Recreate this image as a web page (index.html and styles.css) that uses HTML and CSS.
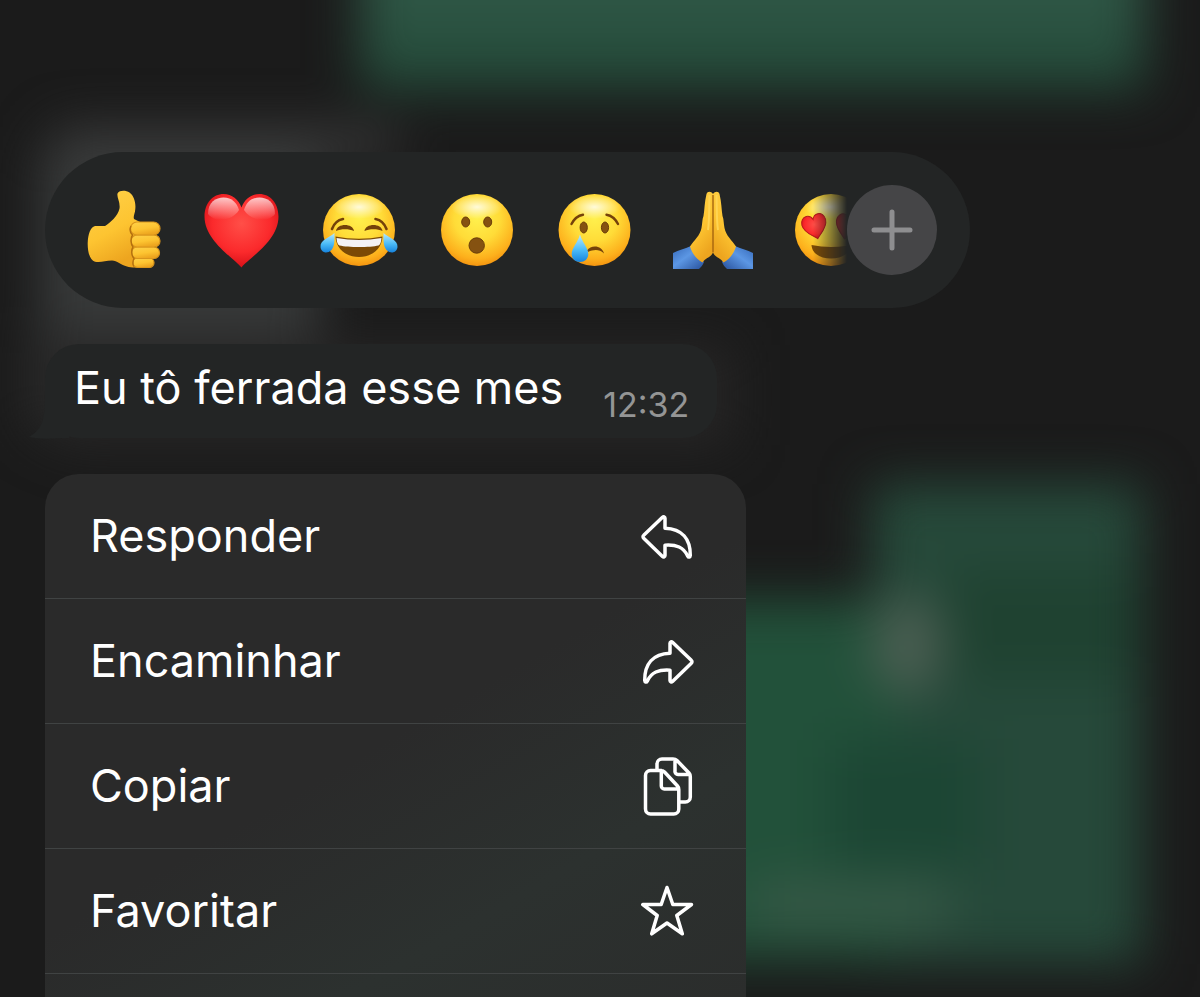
FILE: index.html
```html
<!DOCTYPE html>
<html lang="pt-BR">
<head>
<meta charset="utf-8">
<meta name="viewport" content="width=device-width, initial-scale=1">
<title>Mensagem</title>
<link rel="stylesheet" href="styles.css">
</head>
<body>
<svg class="backdrop" viewBox="0 0 1200 997" preserveAspectRatio="none" aria-hidden="true">
  <defs>
    <filter id="soft" x="-50%" y="-50%" width="200%" height="200%" color-interpolation-filters="sRGB"><feGaussianBlur stdDeviation="25"/></filter>
    <linearGradient id="topGreen" x1="0" y1="0" x2="0" y2="1"><stop offset="0.5" stop-color="#2f5746"/><stop offset="1" stop-color="#224837"/></linearGradient>
  </defs>
  <g filter="url(#soft)">
    <rect x="360" y="-100" width="785" height="190" fill="url(#topGreen)"/>
    <rect x="56" y="128" width="340" height="30" fill="#3c3c3c"/>
    <rect x="40" y="150" width="280" height="190" fill="#383a3a"/>
    <rect x="30" y="330" width="250" height="100" fill="#2c2c2c"/>
    <rect x="60" y="345" width="670" height="100" fill="#272626"/>
    <rect x="872" y="484" width="270" height="480" fill="#26493a"/>
    <rect x="600" y="600" width="300" height="360" fill="#22513a"/>
    <rect x="945" y="570" width="190" height="110" fill="#1f4231"/>
    <rect x="830" y="740" width="150" height="130" fill="#1c4634"/>
    <rect x="750" y="880" width="200" height="50" fill="#365846"/>
    <ellipse cx="908" cy="645" rx="36" ry="50" fill="#4c5f53"/>
  </g>
</svg>

<main class="overlay">
  <section class="reactions" aria-label="Reações">
    <svg width="0" height="0" class="defs" aria-hidden="true">
      <defs>
        <radialGradient id="face" cx="0.5" cy="0.34" r="0.7"><stop offset="0" stop-color="#fff04d"/><stop offset="0.45" stop-color="#ffdc38"/><stop offset="0.8" stop-color="#fdb01c"/><stop offset="1" stop-color="#f08a0c"/></radialGradient>
        <radialGradient id="glow"><stop offset="0" stop-color="#fff" stop-opacity="0.8"/><stop offset="1" stop-color="#fff" stop-opacity="0"/></radialGradient>
        <linearGradient id="shine" x1="0" y1="0" x2="0" y2="1"><stop offset="0" stop-color="#fff" stop-opacity="0.75"/><stop offset="1" stop-color="#fff" stop-opacity="0"/></linearGradient>
        <linearGradient id="tear" x1="0" y1="0" x2="0" y2="1"><stop offset="0" stop-color="#b9eaff"/><stop offset="0.55" stop-color="#4cbcf8"/><stop offset="1" stop-color="#1683dd"/></linearGradient>
        <radialGradient id="red" cx="0.5" cy="0.4" r="0.65"><stop offset="0" stop-color="#ff4f48"/><stop offset="0.6" stop-color="#fb2a2c"/><stop offset="1" stop-color="#d00b14"/></radialGradient>
        <linearGradient id="skin" x1="0" y1="0" x2="0.4" y2="1"><stop offset="0" stop-color="#ffd24a"/><stop offset="0.6" stop-color="#fdc431"/><stop offset="1" stop-color="#eda51f"/></linearGradient>
        <linearGradient id="sleeve" x1="0" y1="0" x2="1" y2="1"><stop offset="0" stop-color="#3468b8"/><stop offset="0.45" stop-color="#5c97e4"/><stop offset="1" stop-color="#27509b"/></linearGradient>
        <path id="heart" d="M39.500 77.500C32 68 2.500 51 2.500 26.500C2.500 13 11 4 21.500 4C30 4 36.500 9.500 39.500 17.500C42.500 9.500 49 4 57.500 4C68 4 76.500 13 76.500 26.500C76.500 51 47 68 39.500 77.500Z"/>
      </defs>
    </svg>
    <div class="reaction-list">
      <button class="reaction" type="button" aria-label="Joinha">
        <svg viewBox="0 0 80 80">
          <path fill="url(#skin)" d="M11 36H21C26 33 34 26 35.500 18.500C36.500 12 32 6 33.800 3C35.500 0 42 0 45.500 2.500C50 5.500 52 13 51.300 19C51 24 49 26 50 29L58 33L60 75C57 78 48 78 43 76.500C37 75 33 70.500 28 70.500C21 70.500 17 73 11 71.700C6 70.500 3.500 62 3.700 53C4 44 6.500 37 11 36Z"/>
          <g fill="url(#skin)" stroke="#d9951c" stroke-width="1.200">
            <rect x="49" y="68" width="21" height="9.500" rx="4.700"/>
            <rect x="47.500" y="57" width="28" height="11.500" rx="5.700"/>
            <rect x="47" y="45" width="29" height="12" rx="6"/>
            <rect x="46.500" y="32" width="29.500" height="13" rx="6.500"/>
          </g>
          <path d="M47 36C45 40 46.500 43 48.500 45C46.500 48 46.500 54 49 57C47 60 47.500 66 50 68.500C48.500 71 48.500 75 50 76.500" stroke="#b3700f" stroke-width="1.400" fill="none"/>
        </svg>
      </button>
      <button class="reaction" type="button" aria-label="Coração">
        <svg viewBox="0 0 80 80">
          <use href="#heart" fill="url(#red)"/>
          <path fill="url(#shine)" d="M6 24C6 12 14 7.500 21.500 7.500C30 7.500 35 13 37 20C31 30 14 34 6 24Z"/>
          <path fill="url(#shine)" d="M73 24C73 12 65 7.500 57.500 7.500C49 7.500 44 13 42 20C48 30 65 34 73 24Z"/>
        </svg>
      </button>
      <button class="reaction" type="button" aria-label="Chorando de rir">
        <svg viewBox="0 0 80 80">
          <circle cx="39" cy="40" r="36" fill="url(#face)"/>
          <ellipse cx="39" cy="17" rx="26" ry="12" fill="url(#glow)"/>
          <g fill="none" stroke="#75420a" stroke-width="2.600" stroke-linecap="round">
            <path d="M12 39C14 33.500 18 30 23 29"/><path d="M66.500 39C64.500 33.500 60.500 30 55.500 29"/>
          </g>
          <path fill="#75420a" d="M16 41C17 33 33 33 34 41C29 38.500 21 38.500 16 41ZM44.500 41C45.500 33 61.500 33 62.500 41C57.500 38.500 49.500 38.500 44.500 41Z"/>
          <path fill="#7b4a05" d="M15.500 46.500Q39 51 62.500 46.500C62 59 52 67 39 67S16 59 15.500 46.500Z"/>
          <path fill="#f4f3f5" d="M16.500 48Q39 52 61.500 48C61 52.500 60.500 54.500 58.500 55.500C50 57.500 28 57.500 19.500 55.500C17.500 54.500 17 52.500 16.500 48Z"/>
          <path fill="url(#tear)" d="M14.500 43C14.500 49 15 56 11.500 60C7 64.500 1 62.500 .5 57C0 50 9 48 14.500 43Z"/>
          <path fill="url(#tear)" d="M63.500 43C63.500 49 63 56 66.500 60C71 64.500 77 62.500 77.500 57C78 50 69 48 63.500 43Z"/>
        </svg>
      </button>
      <button class="reaction" type="button" aria-label="Surpresa">
        <svg viewBox="0 0 80 80">
          <circle cx="39" cy="40" r="36" fill="url(#face)"/>
          <ellipse cx="39" cy="17" rx="26" ry="12" fill="url(#glow)"/>
          <g fill="#855211" stroke="#6b3e08" stroke-width="1"><ellipse cx="27.700" cy="32" rx="4" ry="5"/><ellipse cx="49.700" cy="32" rx="4" ry="5"/><circle cx="38.700" cy="55.500" r="7.700"/></g>
        </svg>
      </button>
      <button class="reaction" type="button" aria-label="Triste">
        <svg viewBox="0 0 80 80">
          <circle cx="38.500" cy="40" r="36" fill="url(#face)"/>
          <ellipse cx="38.500" cy="17" rx="26" ry="12" fill="url(#glow)"/>
          <g fill="none" stroke="#75420a" stroke-width="2.400" stroke-linecap="round"><path d="M15.500 34C18 29 22 25.500 27 24.700"/><path d="M62 34C59.500 29 55.500 25.500 50.500 24.700"/></g>
          <g fill="#855211" stroke="#6b3e08" stroke-width="1"><ellipse cx="27.700" cy="37.500" rx="3.600" ry="5.500"/><ellipse cx="49" cy="37.500" rx="3.600" ry="5.500"/></g>
          <path fill="#75420a" d="M31 60.500C35 54.500 46 55 48 63.500C43 59 38 59.500 32 62Z"/>
          <path fill="url(#tear)" d="M24 44.500C26 52 32.300 58 32.300 64C32.300 69 28.500 72 24 72S15.700 69 15.700 64C15.700 58 22 52 24 44.500Z"/>
        </svg>
      </button>
      <button class="reaction" type="button" aria-label="Mãos juntas">
        <svg viewBox="0 0 80 80">
          <g id="hand">
            <path fill="url(#sleeve)" d="M-1 63C5 60 10 59 17 56L30 72C29 75 27 77 25 79H-1Z"/>
            <path fill="url(#skin)" d="M39 4C37 1 33.500 1 32.500 4C30.500 12 30.500 20 29.500 26C28 30 28.500 33 27.500 38C26 46 20 50 16 56.500C18 63 22 69 28.500 72.500C31 68 38 67 39 62Z"/>
            <path d="M35.500 5C35 18 35.500 30 34 40" fill="none" stroke="#ffd452" stroke-width="2"/>
          </g>
          <use href="#hand" transform="translate(78) scale(-1 1)"/>
          <path d="M39 5V62" stroke="#a5650f" stroke-width="1.400"/>
        </svg>
      </button>
      <button class="reaction" type="button" aria-label="Apaixonado">
        <svg viewBox="0 0 80 80">
          <circle cx="39" cy="40" r="36" fill="url(#face)"/>
          <ellipse cx="39" cy="17" rx="26" ry="12" fill="url(#glow)"/>
          <use href="#heart" fill="url(#red)" stroke="#b5181b" stroke-width="3" transform="translate(7 27) rotate(-14) scale(.33)"/>
          <use href="#heart" fill="url(#red)" stroke="#b5181b" stroke-width="3" transform="translate(46 21) rotate(14) scale(.33)"/>
          <path fill="#7b4a05" d="M19.500 55Q39 59 58.500 55C58 64 49 68.500 39 68.500S20 64 19.500 55Z"/>
        </svg>
      </button>
    </div>
    <button class="more" type="button" aria-label="Mais reações">
      <svg viewBox="0 0 44 44"><path d="M22 4V40M4 22H40"/></svg>
    </button>
  </section>

  <article class="bubble">
    <svg class="tail" viewBox="0 0 40 50" aria-hidden="true"><path d="M16 0C16 28 15 38 0 47C14 50 26 48 40 48V0Z"/></svg>
    <p class="message">Eu tô ferrada esse mes</p>
    <time class="time" datetime="12:32">12:32</time>
  </article>

  <nav class="menu" aria-label="Ações da mensagem">
    <button class="action" type="button">Responder
      <svg class="icon" viewBox="0 0 53 60"><path id="arrow" d="M21.500 11.300L2.700 29.200a2 2 0 0 0 0 3L21.500 50.500c1 .9 2.500.4 2.500-1V39.200C35.500 38.500 42.500 41 46.800 50.200c.7 1.400 2.400 1 2.500-.7C49.500 33 41 22.800 24 22.200V12.300c0-1.400-1.500-1.900-2.500-1z"/></svg>
    </button>
    <button class="action" type="button">Encaminhar
      <svg class="icon" viewBox="0 0 53 60"><use href="#arrow" transform="translate(53) scale(-1 1)"/></svg>
    </button>
    <button class="action" type="button">Copiar
      <svg class="icon" viewBox="0 0 53 60"><path d="M9.500 14.500H19.500Q22 14.500 23.500 16L36.500 30Q37.800 31.500 37.800 33.500V53a5 5 0 0 1-5 5H9.500a5 5 0 0 1-5-5V19.500a5 5 0 0 1 5-5zM20.300 14.500V30a3 3 0 0 0 3 3H37.800M16 14V8a5 5 0 0 1 5-5H32Q34.500 3 36 4.500L48 17Q49.300 18.500 49.300 20.500V41a5 5 0 0 1-5 5H38.500M34 3.500V15a3 3 0 0 0 3 3.500H49"/></svg>
    </button>
    <button class="action" type="button">Favoritar
      <svg class="icon" viewBox="0 0 53 60"><path d="M26 6.500L31.800 23.500H50.500L35.800 34.500L41.300 52.800L26 42L10.700 52.800L16.200 34.500L1.800 23.500H20.200Z"/></svg>
    </button>
  </nav>
</main>
</body>
</html>
```
FILE: styles.css
```css
* { box-sizing: border-box; }

body {
  margin: 0;
  background: #1b1b1b;
  color: #fff;
  font-family: Inter, "Liberation Sans", sans-serif;
}

.backdrop {
  position: absolute;
  inset: 0;
  width: 100%;
  height: 100%;
}

.defs { position: absolute; }

.overlay {
  position: relative;
  display: flex;
  flex-direction: column;
  align-items: flex-start;
  gap: 36px;
  min-height: 100vh;
  padding: 152px 45px 0;
}

button {
  border: 0;
  padding: 0;
  background: none;
  color: inherit;
  font: inherit;
  text-align: left;
}

.reactions {
  display: flex;
  align-items: center;
  width: 100%;
  max-width: 925px;
  padding: 33px 33px 33px 39px;
  border-radius: 78px;
  background: #232525;
}

.reaction-list {
  display: flex;
  flex: 1;
  gap: 38px;
  min-width: 0;
  overflow: hidden;
  mask-image: linear-gradient(to right, #000 calc(100% - 34px), transparent 100%);
}

.reaction {
  flex: none;
  width: 80px;
  height: 80px;
}

.reaction svg {
  display: block;
  width: 100%;
  height: 100%;
  overflow: visible;
}

.more {
  display: grid;
  place-items: center;
  flex: none;
  width: 90px;
  height: 90px;
  border-radius: 50%;
  background: #454547;
}

.more svg {
  width: 44px;
  height: 44px;
  fill: none;
  stroke: #8e8e90;
  stroke-width: 5;
  stroke-linecap: round;
}

.bubble {
  position: relative;
  display: flex;
  align-items: flex-end;
  gap: 40px;
  padding: 16px 28px 16px 29px;
  border-radius: 34px;
  background: #232525;
}

.tail {
  position: absolute;
  left: -16px;
  bottom: -2px;
  width: 40px;
  height: 50px;
  fill: #232525;
}

.message {
  position: relative;
  margin: 0 0 6px;
  font-size: 45px;
  line-height: 56px;
}

.time {
  position: relative;
  color: #949595;
  font-size: 34px;
  line-height: 34px;
}

.menu {
  display: flex;
  flex: 1;
  flex-direction: column;
  width: 100%;
  max-width: 701px;
  border-radius: 34px 34px 0 0;
  background: linear-gradient(150deg, #2a2a2a 50%, #2c312f 75%, #2b2d2c 100%);
}

.action {
  display: flex;
  flex: none;
  align-items: center;
  justify-content: space-between;
  height: 125px;
  padding: 0 52px 0 45px;
  border-bottom: 1px solid #404343;
  font-size: 45px;
  line-height: 56px;
}

.icon {
  width: 53px;
  height: 60px;
  fill: none;
  stroke: #fff;
  stroke-width: 3.5;
  stroke-linecap: round;
  stroke-linejoin: round;
}
```
